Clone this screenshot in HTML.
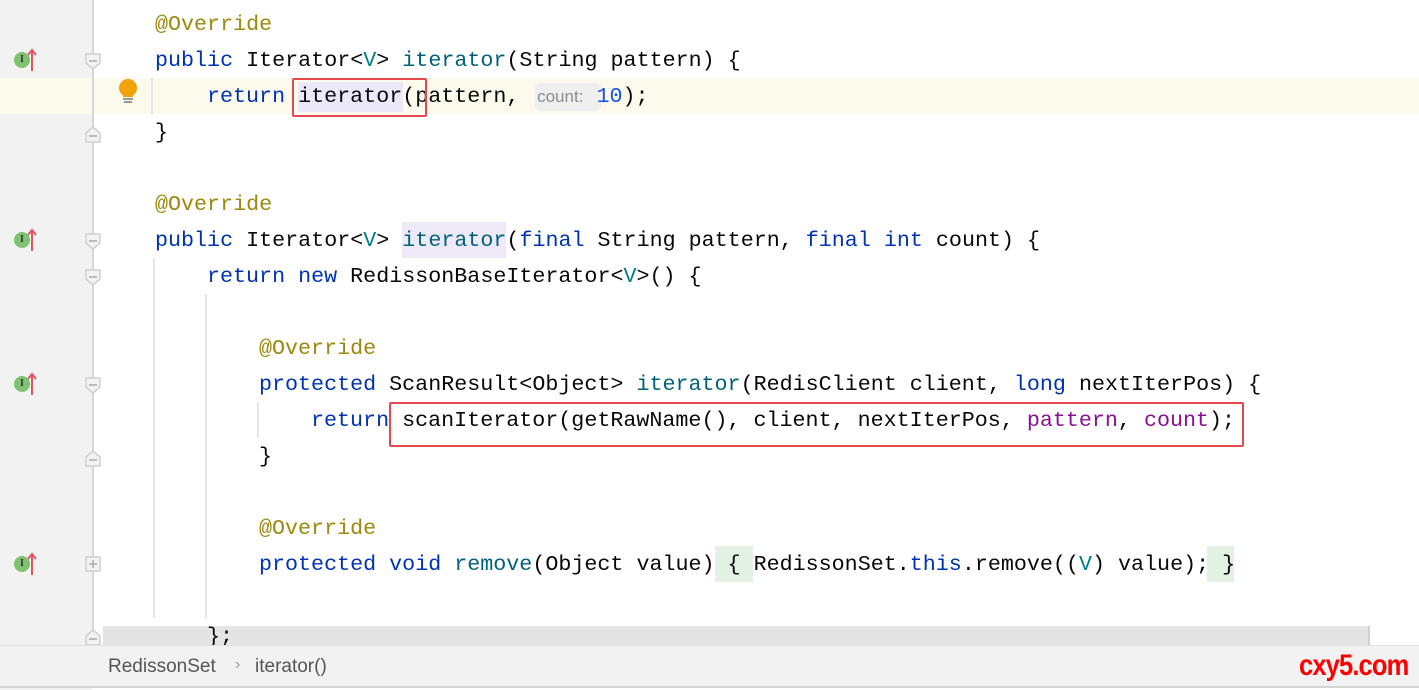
<!DOCTYPE html>
<html><head><meta charset="utf-8"><style>
body{margin:0;width:1419px;height:690px;overflow:hidden;background:#fff;position:relative;font-family:"Liberation Mono",monospace;}
.gut{position:absolute;left:0;top:0;width:92px;height:690px;background:#f2f2f2;}
.gl{position:absolute;left:92px;top:0;width:2px;height:645px;background:#d6d6d6;}
.ln{position:absolute;left:0;height:36px;line-height:36px;font-size:21.7px;white-space:pre;color:#080808;margin-top:1px;}
.k{color:#0033b3}.a{color:#9e880d}.m{color:#00627a}.p{color:#871094}.n{color:#1750eb}.t{color:#007e8a}
.ig{position:absolute;width:2px;background:#e6e6e6;}
.ico{position:absolute;left:14px;width:16px;height:16px;border-radius:50%;background:#7fc271;font:bold 10px "Liberation Serif",serif;color:#333;text-align:center;line-height:16px;}
.fold{position:absolute;left:85px;width:16px;height:16px;}
.box{position:absolute;border:2px solid #e5484d;border-radius:2px;}
</style></head><body>
<div class="gut"></div>
<div style="position:absolute;left:0;top:78px;width:1419px;height:36px;background:#fcfaed"></div>
<div class="gl"></div>
<div style="position:absolute;left:103px;top:626px;width:1265px;height:19px;background:#e4e4e4;border-right:2px solid #d0d0d0"></div>
<div class="ig" style="left:153px;top:258px;height:360px"></div>
<div class="ig" style="left:205px;top:294px;height:325px"></div>
<div class="ig" style="left:257px;top:402px;height:36px"></div>
<div class="ig" style="left:151px;top:78px;height:36px"></div>
<div style="position:absolute;left:298px;top:82px;width:105px;height:30px;background:#ebe9f7"></div>
<div style="position:absolute;left:402px;top:222px;width:104px;height:36px;background:#ede9f7"></div>
<div style="position:absolute;left:535px;top:83px;width:66px;height:28px;background:#efefef;border-radius:5px"></div>
<div style="position:absolute;left:715px;top:546px;width:38px;height:36px;background:#e3f1e3"></div>
<div style="position:absolute;left:1207px;top:546px;width:27px;height:36px;background:#e3f1e3"></div>
<div class="ln" style="top:6px;left:155px"><span class="a">@Override</span></div>
<div class="ln" style="top:42px;left:155px"><span class="k">public</span> Iterator&lt;<span class="t">V</span>&gt; <span class="m">iterator</span>(String pattern) {</div>
<div class="ln" style="top:78px;left:207px"><span class="k">return</span> iterator(pattern, <span style="font-family:'Liberation Sans',sans-serif;font-size:17px;color:#8c8c8c">&nbsp;count:</span> <span class="n">10</span>);</div>
<div class="ln" style="top:114px;left:155px">}</div>
<div class="ln" style="top:186px;left:155px"><span class="a">@Override</span></div>
<div class="ln" style="top:222px;left:155px"><span class="k">public</span> Iterator&lt;<span class="t">V</span>&gt; <span class="m">iterator</span>(<span class="k">final</span> String pattern, <span class="k">final int</span> count) {</div>
<div class="ln" style="top:258px;left:207px"><span class="k">return new</span> RedissonBaseIterator&lt;<span class="t">V</span>&gt;() {</div>
<div class="ln" style="top:330px;left:259px"><span class="a">@Override</span></div>
<div class="ln" style="top:366px;left:259px"><span class="k">protected</span> ScanResult&lt;Object&gt; <span class="m">iterator</span>(RedisClient client, <span class="k">long</span> nextIterPos) {</div>
<div class="ln" style="top:402px;left:311px"><span class="k">return</span> scanIterator(getRawName(), client, nextIterPos, <span class="p">pattern</span>, <span class="p">count</span>);</div>
<div class="ln" style="top:438px;left:259px">}</div>
<div class="ln" style="top:510px;left:259px"><span class="a">@Override</span></div>
<div class="ln" style="top:546px;left:259px"><span class="k">protected void</span> <span class="m">remove</span>(Object value) { RedissonSet.<span class="k">this</span>.remove((<span class="t">V</span>) value); }</div>
<div class="ln" style="top:618px;left:207px;height:26px;overflow:hidden">};</div>
<div class="box" style="left:292px;top:78px;width:131px;height:35px"></div>
<div class="box" style="left:389px;top:402px;width:851px;height:41px"></div>
<svg style="position:absolute;left:0;top:0" width="110" height="645">
<g fill="none" stroke="#e05561" stroke-width="2">
<path d="M32 71V50M28 55l4-5 4 5"/><path d="M32 251V230M28 235l4-5 4 5"/><path d="M32 395V374M28 379l4-5 4 5"/><path d="M32 575V554M28 559l4-5 4 5"/></g>
<g fill="#f2f2f2" stroke="#cfcfcf" stroke-width="1.5">
<path d="M86 54h14v9l-7 6-7-6z"/><path d="M86 234h14v9l-7 6-7-6z"/><path d="M86 270h14v9l-7 6-7-6z"/><path d="M86 378h14v9l-7 6-7-6z"/>
<path d="M86 142h14v-9l-7-6-7 6z"/><path d="M86 466h14v-9l-7-6-7 6z"/><path d="M86 645h14v-9l-7-6-7 6z"/>
<rect x="86" y="557" width="14" height="14"/></g>
<g stroke="#aaa" stroke-width="1.5"><path d="M89 61h8M89 136h8M89 241h8M89 277h8M89 385h8M89 460h8M89 564h8M93 560v8M89 639h8"/></g>
</svg>
<div class="ico" style="top:52px">I</div><div class="ico" style="top:232px">I</div><div class="ico" style="top:376px">I</div><div class="ico" style="top:556px">I</div>
<svg style="position:absolute;left:117px;top:78px" width="22" height="30"><circle cx="11" cy="10" r="9" fill="#f0a30a"/><rect x="6" y="14" width="10" height="5" fill="#f0a30a"/><path d="M6 21h10M7 24h8" stroke="#777" stroke-width="1.5"/></svg>
<div style="position:absolute;left:0;top:645px;width:1419px;height:40px;background:#f2f2f2;border-top:1px solid #e0e0e0;border-bottom:2px solid #d4d4d4"></div>
<div style="position:absolute;left:108px;top:656px;font:19px 'Liberation Sans',sans-serif;color:#555">RedissonSet</div>
<div style="position:absolute;left:235px;top:656px;font:16px 'Liberation Sans',sans-serif;color:#999">›</div>
<div style="position:absolute;left:255px;top:656px;font:19px 'Liberation Sans',sans-serif;color:#555">iterator()</div>
<div style="position:absolute;left:1299px;top:649px;font:bold 30px 'Liberation Sans',sans-serif;color:#f00;letter-spacing:-1px;transform:scaleX(0.85);transform-origin:left">cxy5.com</div>
</body></html>
